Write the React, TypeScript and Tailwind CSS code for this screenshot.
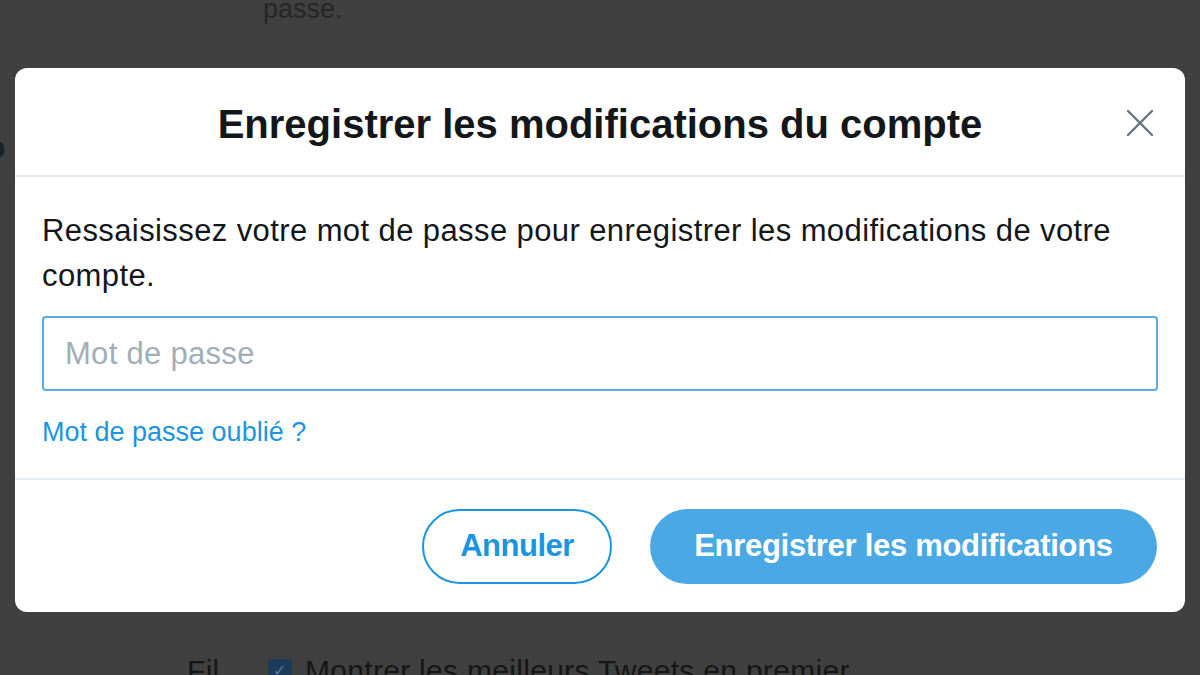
export default function App() {
  return (
    <div
      className="relative h-[675px] w-[1200px] overflow-hidden bg-[#404040]"
      style={{ fontFamily: '"Liberation Sans", Arial, sans-serif' }}
    >
      {/* page behind the dimmed overlay */}
      <div className="flex h-full flex-col">
        <p className="ml-[263px] mt-[-9px] text-[27px] leading-[36px] text-[#262626]">passe.</p>
        <p className="ml-[-14px] mt-[100px] text-[32px] font-bold leading-[40px] text-[#1a2229]">o</p>
        <div className="mt-auto mb-[-16px] flex items-center text-[30px] leading-[40px] tracking-[0.3px] text-[#161616]">
          <span className="ml-[187px] w-[81px]">Fil</span>
          <span className="flex h-[24px] w-[24px] items-center justify-center rounded-[4px] bg-[#1d3a57] text-[16px] text-[#4f7aa5]">
            ✓
          </span>
          <span className="ml-[13px]">Montrer les meilleurs Tweets en premier</span>
        </div>
      </div>

      {/* modal */}
      <div className="absolute left-[15px] top-[68px] flex w-[1170px] flex-col rounded-[12px] bg-white">
        <div className="relative flex h-[109px] items-center justify-center border-b-2 border-[#e6ecf0]">
          <h1 className="pt-[4px] text-[40px] font-bold text-[#14171a]">Enregistrer les modifications du compte</h1>
          <button className="absolute right-[31px] top-[41px] text-[#66757f]">
            <svg width="28" height="28" viewBox="0 0 28 28" fill="none" stroke="currentColor" strokeWidth="2.4" strokeLinecap="round">
              <path d="M2 2L26 26M26 2L2 26" />
            </svg>
          </button>
        </div>

        <div className="flex flex-col border-b-2 border-[#e6ecf0] px-[27px] pb-[31px] pt-[31px]">
          <p className="text-[31px] leading-[45px] tracking-[0.4px] text-[#14171a]">
            Ressaisissez votre mot de passe pour enregistrer les modifications de votre compte.
          </p>
          <input
            type="password"
            placeholder="Mot de passe"
            className="mt-[18px] h-[75px] w-full rounded-[4px] border-2 border-[#5caae6] px-[21px] text-[31px] tracking-[0.3px] text-[#14171a] outline-none placeholder:text-[#a3adb5]"
          />
          <a className="mt-[26px] text-[27px] leading-[30px] text-[#1b95e0]">Mot de passe oublié ?</a>
        </div>

        <div className="flex justify-end gap-[38px] px-[28px] pb-[28px] pt-[29px]">
          <button className="h-[75px] w-[190px] rounded-full border-2 border-[#1b95e0] text-[31px] font-bold tracking-[-0.5px] text-[#1b95e0]">
            Annuler
          </button>
          <button className="h-[75px] w-[507px] rounded-full bg-[#4aa8e4] text-[31px] font-bold tracking-[-0.3px] text-white">
            Enregistrer les modifications
          </button>
        </div>
      </div>
    </div>
  )
}
